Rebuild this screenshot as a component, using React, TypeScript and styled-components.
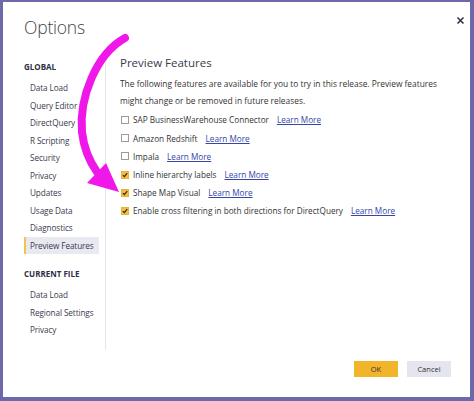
import React from "react";
import styled, { createGlobalStyle } from "styled-components";

const GlobalStyle = createGlobalStyle`
  html, body {
    margin: 0;
    padding: 0;
    background: #ffffff;
  }
  #root {
    width: 474px;
    height: 401px;
  }
`;

const Frame = styled.div`
  position: relative;
  box-sizing: border-box;
  width: 474px;
  height: 401px;
  border-style: solid;
  border-color: #6c68aa;
  border-width: 2px 4px 4px 3px;
  background: #fff;
  display: flex;
  flex-direction: column;
  font-family: "Open Sans", "Noto Sans", sans-serif;
  color: #333;
`;

const Header = styled.div`
  display: flex;
  justify-content: space-between;
  align-items: flex-start;
  height: 50px;
  padding: 0 5px 0 21px;
`;

const Title = styled.div`
  margin-top: 13px;
  font-size: 17.5px;
  line-height: 24px;
  font-weight: 300;
  color: #454545;
  letter-spacing: -0.2px;
`;

const CloseBtn = styled.div`
  margin-top: 6px;
  width: 9px;
  height: 9px;
`;

const Body = styled.div`
  flex: 1;
  display: flex;
`;

const Sidebar = styled.div`
  width: 81px;
  padding-left: 21px;
  padding-top: 1px;
  margin-top: 8px;
  margin-bottom: 11px;
  border-right: 1px solid #e6e6ec;
`;

const SectionTitle = styled.div<{ $gap?: number }>`
  font-size: 8px;
  font-weight: 700;
  color: #2f2f45;
  line-height: 12px;
  margin-top: ${(p) => p.$gap || 0}px;
  margin-bottom: 6px;
`;

const NavItem = styled.div<{ $active?: boolean }>`
  font-size: 8.2px;
  letter-spacing: -0.1px;
  color: #3a3a4c;
  height: 17.5px;
  line-height: 17.5px;
  padding-left: 4px;
  width: 69px;
  border-left: 2px solid ${(p) => (p.$active ? "#f2c14e" : "transparent")};
  background: ${(p) => (p.$active ? "#e9e9f1" : "transparent")};
  white-space: nowrap;
`;

const Main = styled.div`
  flex: 1;
  padding-left: 14px;
  padding-top: 1px;
`;

const Heading = styled.div`
  font-size: 11.5px;
  color: #3a3a4a;
  line-height: 20px;
`;

const Desc = styled.div`
  font-size: 8.4px;
  color: #333;
  line-height: 17px;
  width: 325px;
  margin-top: 1.5px;
  margin-bottom: 2.4px;
`;

const Row = styled.div`
  display: flex;
  align-items: center;
  height: 18.2px;
  font-size: 8.2px;
  color: #333;
  white-space: nowrap;
`;

const Box = styled.div<{ $checked?: boolean }>`
  box-sizing: border-box;
  width: 8px;
  height: 8px;
  margin-left: 1px;
  margin-right: 4px;
  border: 1px solid ${(p) => (p.$checked ? "#e8b13a" : "#9a9a9a")};
  background: ${(p) => (p.$checked ? "#f2be45" : "#fff")};
  display: flex;
  align-items: center;
  justify-content: center;
`;

const Link = styled.a`
  margin-left: 8px;
  color: #3446a8;
  text-decoration: underline;
`;

const Footer = styled.div`
  display: flex;
  justify-content: flex-end;
  gap: 9px;
  padding: 0 19px 20px 0;
`;

const Button = styled.div<{ $primary?: boolean }>`
  width: 44px;
  height: 16px;
  line-height: 16px;
  text-align: center;
  font-size: 7.5px;
  color: #333;
  background: ${(p) => (p.$primary ? "#f2b42a" : "#e5e5ef")};
`;

const ArrowLayer = styled.svg`
  position: absolute;
  left: -3px;
  top: -2px;
  pointer-events: none;
`;

const features = [
  { label: "SAP BusinessWarehouse Connector", checked: false },
  { label: "Amazon Redshift", checked: false },
  { label: "Impala", checked: false },
  { label: "Inline hierarchy labels", checked: true },
  { label: "Shape Map Visual", checked: true },
  { label: "Enable cross filtering in both directions for DirectQuery", checked: true },
];

const globalNav = [
  "Data Load",
  "Query Editor",
  "DirectQuery",
  "R Scripting",
  "Security",
  "Privacy",
  "Updates",
  "Usage Data",
  "Diagnostics",
  "Preview Features",
];

const fileNav = ["Data Load", "Regional Settings", "Privacy"];

const Check = () => (
  <svg width="6" height="6" viewBox="0 0 7 7">
    <path d="M1 3.6 L2.8 5.4 L6 1.4" fill="none" stroke="#3b2a05" strokeWidth="1.5" />
  </svg>
);

export default function App() {
  return (
    <>
      <GlobalStyle />
      <Frame>
        <Header>
          <Title>Options</Title>
          <CloseBtn>
            <svg width="9" height="9" viewBox="0 0 9 9">
              <path d="M1.5 1.5 L7.5 7.5 M7.5 1.5 L1.5 7.5" stroke="#2e2e3e" strokeWidth="1.5" />
            </svg>
          </CloseBtn>
        </Header>
        <Body>
          <Sidebar>
            <SectionTitle>GLOBAL</SectionTitle>
            {globalNav.map((n) => (
              <NavItem key={n} $active={n === "Preview Features"}>
                {n}
              </NavItem>
            ))}
            <SectionTitle $gap={14}>CURRENT FILE</SectionTitle>
            {fileNav.map((n) => (
              <NavItem key={"f" + n}>{n}</NavItem>
            ))}
          </Sidebar>
          <Main>
            <Heading>Preview Features</Heading>
            <Desc>
              The following features are available for you to try in this release. Preview features
              might change or be removed in future releases.
            </Desc>
            {features.map((f) => (
              <Row key={f.label}>
                <Box $checked={f.checked}>{f.checked && <Check />}</Box>
                {f.label}
                <Link>Learn More</Link>
              </Row>
            ))}
          </Main>
        </Body>
        <Footer>
          <Button $primary>OK</Button>
          <Button>Cancel</Button>
        </Footer>
        <ArrowLayer width="474" height="401" viewBox="0 0 474 401">
          <path
            d="M125 38 C 96 54 79 98 82 132 C 84 150 90 162 97 172"
            fill="none"
            stroke="#f018e8"
            strokeWidth="8"
            strokeLinecap="round"
          />
          <polygon points="87,183 106,163 119,192" fill="#f018e8" />
        </ArrowLayer>
      </Frame>
    </>
  );
}
